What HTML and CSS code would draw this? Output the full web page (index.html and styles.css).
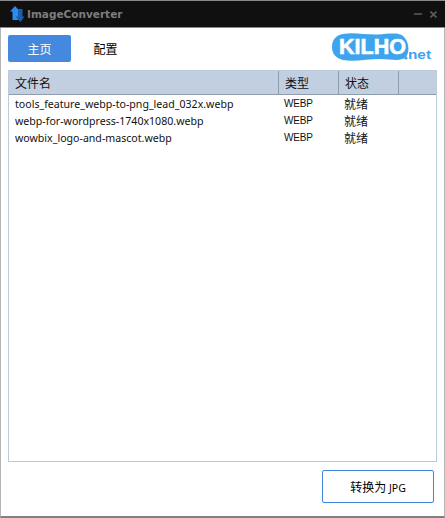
FILE: index.html
```html
<!DOCTYPE html>
<html lang="zh">
<head>
<meta charset="utf-8">
<title>ImageConverter</title>
<link rel="stylesheet" href="styles.css">
</head>
<body>
<div class="window">
  <header class="titlebar">
    <svg class="app-icon" width="16" height="18" viewBox="0 0 16 18">
      <path d="M6 1 L11 6.5 H9 V15 H3.5 V6.5 H1 Z" fill="#2a8cf0"/>
      <path d="M11.5 17 L6.5 11.5 H9 V4 H13.5 V11.5 H15.5 Z" fill="#1a5fae"/>
    </svg>
    <span class="app-title">ImageConverter</span>
    <span class="controls">
      <span class="minimize"></span>
      <svg class="close" width="7" height="7" viewBox="0 0 7 7"><path d="M0.5 0.5 L6.5 6.5 M6.5 0.5 L0.5 6.5" stroke="#5c5c5c" stroke-width="1.6"/></svg>
    </span>
  </header>
  <main class="content">
    <nav class="toolbar">
      <button class="tab tab-active">主页</button>
      <button class="tab tab-plain">配置</button>
      <svg class="logo" width="100" height="30" viewBox="0 0 100 30">
        <path d="M11 1 C22 -1 34 2 46 1.5 C56 1 66 -1 71 3 C77 8 78 19 74 24 C68 29 60 26 48 26 C36 26 22 29 11 27 C3 25 0 20 0 14 C0 7 4 2 11 1 Z" fill="#3fa4ee"/>
        <text class="logo-main" x="7" y="21" textLength="67" lengthAdjust="spacingAndGlyphs">KILHO</text>
        <circle cx="74" cy="25" r="1.6" fill="#3fa4ee"/>
        <text class="logo-net" x="76" y="26" textLength="23" lengthAdjust="spacingAndGlyphs">net</text>
      </svg>
    </nav>
    <section class="table">
      <div class="row head">
        <div class="cell c-name">文件名</div>
        <div class="cell c-type">类型</div>
        <div class="cell c-status">状态</div>
        <div class="cell c-fill"></div>
      </div>
      <div class="body">
        <div class="row item">
          <div class="cell c-name">tools_feature_webp-to-png_lead_032x.webp</div>
          <div class="cell c-type">WEBP</div>
          <div class="cell c-status">就绪</div>
        </div>
        <div class="row item">
          <div class="cell c-name">webp-for-wordpress-1740x1080.webp</div>
          <div class="cell c-type">WEBP</div>
          <div class="cell c-status">就绪</div>
        </div>
        <div class="row item">
          <div class="cell c-name">wowbix_logo-and-mascot.webp</div>
          <div class="cell c-type">WEBP</div>
          <div class="cell c-status">就绪</div>
        </div>
      </div>
    </section>
    <footer class="actions">
      <button class="convert">转换为 <span class="latin">JPG</span></button>
    </footer>
  </main>
</div>
</body>
</html>
```
FILE: styles.css
```css
* { box-sizing: border-box; }
html, body { margin: 0; padding: 0; }
body {
  width: 445px;
  height: 518px;
  overflow: hidden;
  background: #fff;
  font-family: "Noto Sans", "Noto Sans CJK SC", sans-serif;
}
.window {
  width: 445px;
  height: 518px;
  display: flex;
  flex-direction: column;
  border-left: 1px solid #b5b5b5;
  border-right: 1px solid #b5b5b5;
  border-bottom: 2px solid #808080;
}
.titlebar {
  height: 28px;
  flex: none;
  margin: 0 -1px;
  background: #101010;
  border-top: 1px solid #8a8a8a;
  border-bottom: 1px solid #8a8a8a;
  display: flex;
  align-items: center;
  padding: 0 8px 0 9px;
}
.app-icon { flex: none; }
.app-title {
  margin-left: 2px;
  font-family: "DejaVu Sans", sans-serif;
  font-weight: bold;
  font-size: 10.5px;
  color: #7d7d7d;
}
.controls {
  margin-left: auto;
  display: flex;
  align-items: center;
  gap: 8px;
}
.minimize { width: 8px; height: 2px; background: #4a4a4a; }
.content {
  flex: 1;
  min-height: 0;
  display: flex;
  flex-direction: column;
  padding: 7px 7px 13px;
}
.toolbar {
  height: 35px;
  flex: none;
  display: flex;
  align-items: flex-start;
}
.tab {
  width: 63px;
  height: 27px;
  border: 0;
  border-radius: 2px;
  background: transparent;
  color: #000;
  font-family: "Noto Sans CJK SC", sans-serif;
  font-size: 12px;
  padding: 0;
}
.tab-plain { margin-left: 3px; }
.tab-active { background: #4489e0; color: #fff; }
.logo { margin-left: auto; margin-right: 5px; margin-top: -2px; overflow: visible; }
.logo-main { font-family: "Liberation Sans", sans-serif; font-weight: bold; font-size: 22px; fill: #fff; stroke: #fff; stroke-width: 0.6; }
.logo-net { font-family: "Liberation Sans", sans-serif; font-weight: bold; font-size: 12px; fill: #3fa4ee; }
.table {
  flex: 1;
  min-height: 0;
  border: 1px solid #b9cbdc;
  background: #fff;
}
.row { display: flex; }
.head {
  height: 24px;
  background: #c1cfe0;
  border-bottom: 1px solid #8e9cac;
  font-family: "Noto Sans CJK SC", sans-serif;
  font-size: 12px;
  color: #111;
}
.head .cell {
  border-right: 1px solid #8e9cac;
  line-height: 23px;
}
.cell { padding-left: 6px; white-space: nowrap; }
.c-name { width: 270px; }
.c-type { width: 60px; }
.c-status { width: 60px; }
.c-fill { flex: 1; border-right: 0 !important; }
.item {
  height: 17px;
  line-height: 18px;
  font-size: 10.6px;
  color: #111;
}
.item .c-type {
  font-family: "Liberation Sans", sans-serif;
  font-size: 10px;
  letter-spacing: -0.2px;
  padding-left: 5px;
}
.item .c-status {
  font-family: "Noto Sans CJK SC", sans-serif;
  font-size: 12px;
  line-height: 17px;
  padding-left: 5px;
}
.actions {
  flex: none;
  display: flex;
  justify-content: flex-end;
  padding: 8px 3px 0 0;
}
.convert {
  width: 112px;
  height: 33px;
  background: #fff;
  border: 1px solid #3f86e0;
  border-radius: 2px;
  font-family: "Noto Sans CJK SC", sans-serif;
  font-size: 12px;
  color: #000;
  padding: 0;
}
.latin { font-family: "Noto Sans", sans-serif; font-size: 10.5px; }
```
